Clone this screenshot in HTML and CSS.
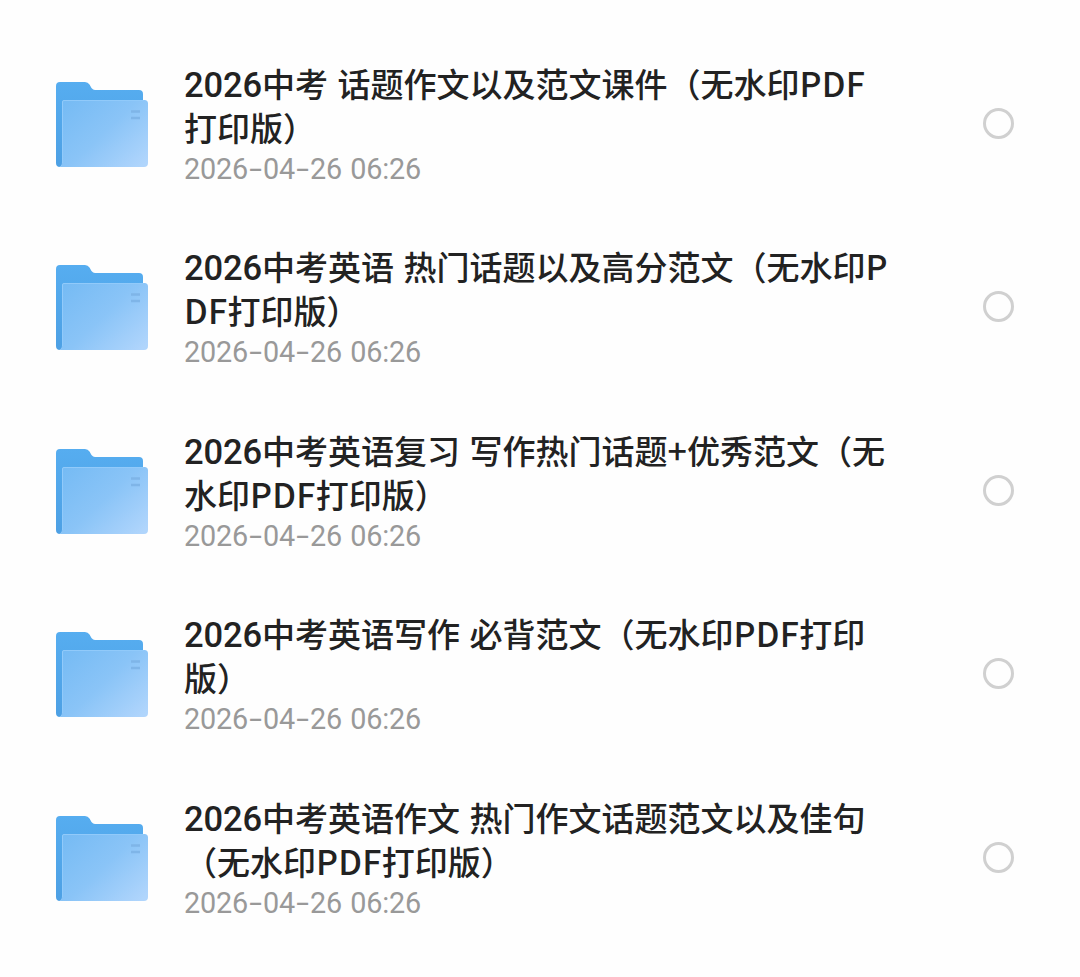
FILE: index.html
```
<!DOCTYPE html>
<html lang="zh-CN">
<head>
    <meta charset="UTF-8">
    <meta name="viewport" content="width=device-width, initial-scale=1.0">
    <title>文件列表</title>
    <link rel="stylesheet" href="styles.css">
</head>
<body>
    <!-- shared folder icon -->
    <svg class="defs" width="0" height="0">
        <defs>
            <linearGradient id="back" x1="0" y1="0" x2="0" y2="1">
                <stop offset="0" stop-color="#56adf0"/>
                <stop offset="1" stop-color="#4da0e4"/>
            </linearGradient>
            <linearGradient id="front" x1="0" y1="0.1" x2="1" y2="0.9">
                <stop offset="0" stop-color="#76bbf4"/>
                <stop offset="0.5" stop-color="#8ac4f7"/>
                <stop offset="1" stop-color="#b0d5fc"/>
            </linearGradient>
        </defs>
        <symbol id="folder" viewBox="0 0 92 86">
            <path fill="url(#back)" d="M4 0H29Q32 0 33.500 2.500L35.500 6Q37 8 39 8H83Q87 8 87 12V82H7L4 85Q0 85 0 81V4Q0 0 4 0Z"/>
            <path fill="url(#front)" d="M8 18H88.500Q92 18 92 21.500V81Q92 85 88 85H3Q6 84 6 80V20Q6 18 8 18Z"/>
            <path fill="none" stroke="#91cafa" d="M6.500 81V20Q6.500 18.500 8 18.500H88"/>
            <path fill="none" stroke="#7fb5e8" stroke-width="2.500" d="M75 29.500H84M75 36H84"/>
        </symbol>
    </svg>

    <ul class="file-list">
        <li class="file">
            <svg class="icon"><use href="#folder"/></svg>
            <div class="info">
                <div class="name"><span class="year">2026</span>中考 话题作文以及范文课件（无水印<span class="ext">PDF</span><br>打印版）</div>
                <div class="date">2026<i>-</i>04<i>-</i>26 06:26</div>
            </div>
            <span class="check"></span>
        </li>
        <li class="file">
            <svg class="icon"><use href="#folder"/></svg>
            <div class="info">
                <div class="name"><span class="year">2026</span>中考英语 热门话题以及高分范文（无水印<span class="ext">P<br>DF</span>打印版）</div>
                <div class="date">2026<i>-</i>04<i>-</i>26 06:26</div>
            </div>
            <span class="check"></span>
        </li>
        <li class="file">
            <svg class="icon"><use href="#folder"/></svg>
            <div class="info">
                <div class="name"><span class="year">2026</span>中考英语复习 写作热门话题<span class="ext">+</span>优秀范文（无<br>水印<span class="ext">PDF</span>打印版）</div>
                <div class="date">2026<i>-</i>04<i>-</i>26 06:26</div>
            </div>
            <span class="check"></span>
        </li>
        <li class="file">
            <svg class="icon"><use href="#folder"/></svg>
            <div class="info">
                <div class="name"><span class="year">2026</span>中考英语写作 必背范文（无水印<span class="ext">PDF</span>打印<br>版）</div>
                <div class="date">2026<i>-</i>04<i>-</i>26 06:26</div>
            </div>
            <span class="check"></span>
        </li>
        <li class="file">
            <svg class="icon"><use href="#folder"/></svg>
            <div class="info">
                <div class="name"><span class="year">2026</span>中考英语作文 热门作文话题范文以及佳句<br>（无水印<span class="ext">PDF</span>打印版）</div>
                <div class="date">2026<i>-</i>04<i>-</i>26 06:26</div>
            </div>
            <span class="check"></span>
        </li>
    </ul>
</body>
</html>
```

FILE: styles.css
```
body {
    margin: 0;
    background: #fefefe;
    font-family: "Noto Sans CJK SC", sans-serif;
}

.defs {
    display: block;
}

.file-list {
    list-style: none;
    margin: 0;
    padding: 32px 66px 0 56px;
}

.file {
    display: flex;
    align-items: center;
    height: 183.5px;
}

.icon {
    width: 92px;
    height: 86px;
    margin-top: 2px;
    flex: none;
}

.info {
    flex: 1;
    margin-left: 36px;
    white-space: nowrap;
}

.name {
    font-size: 33px;
    font-weight: 500;
    line-height: 44px;
    word-spacing: 2px;
    color: #222;
}

.year {
    font-family: Roboto, sans-serif;
    font-size: 34.5px;
    line-height: 1;
    letter-spacing: -0.1px;
}

.ext {
    font-size: 34px;
    line-height: 1;
    letter-spacing: 0.2px;
}

.date {
    margin-top: 2px;
    font-family: Roboto, sans-serif;
    font-size: 28.8px;
    line-height: 36px;
    letter-spacing: -0.2px;
    word-spacing: 1.5px;
    color: #999;
}

.date i {
    display: inline-block;
    width: 15px;
    text-align: center;
    font-style: normal;
    transform: scaleX(1.6);
}

.check {
    box-sizing: border-box;
    width: 31px;
    height: 31px;
    margin-top: -1px;
    border: 3px solid #d0d0d0;
    border-radius: 50%;
}
```
